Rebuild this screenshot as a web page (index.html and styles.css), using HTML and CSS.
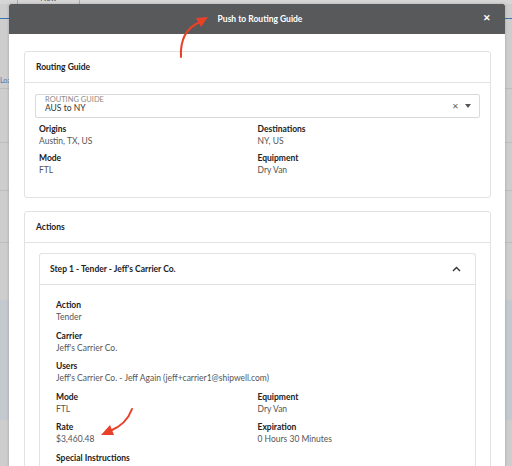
FILE: index.html
```html
<!DOCTYPE html>
<html lang="en">
<head>
    <meta charset="UTF-8">
    <title>Push to Routing Guide</title>
    <link rel="stylesheet" href="styles.css">
</head>
<body>
    <div class="page">
        <div class="bg-tabs"><span class="bg-tab">New</span></div>
        <div class="bg-line bg-line-left"></div>
        <div class="bg-line bg-line-right"></div>
        <span class="bg-link">Loads</span>

        <div class="modal">
            <div class="modal-header">
                <span class="modal-title">Push to Routing Guide</span>
                <span class="modal-close">&#x2715;</span>
            </div>
            <div class="modal-body">
                <div class="card">
                    <div class="card-header">Routing Guide</div>
                    <div class="card-body">
                        <div class="select">
                            <div class="select-text">
                                <div class="select-label">ROUTING GUIDE</div>
                                <div class="select-value">AUS to NY</div>
                            </div>
                            <span class="select-clear">&#x2715;</span>
                            <span class="select-caret"></span>
                        </div>
                        <div class="fields">
                            <div class="field">
                                <div class="field-label">Origins</div>
                                <div class="field-value">Austin, TX, US</div>
                            </div>
                            <div class="field">
                                <div class="field-label">Destinations</div>
                                <div class="field-value">NY, US</div>
                            </div>
                            <div class="field">
                                <div class="field-label">Mode</div>
                                <div class="field-value">FTL</div>
                            </div>
                            <div class="field">
                                <div class="field-label">Equipment</div>
                                <div class="field-value">Dry Van</div>
                            </div>
                        </div>
                    </div>
                </div>

                <div class="card">
                    <div class="card-header">Actions</div>
                    <div class="card-body actions-body">
                        <div class="card step">
                            <div class="card-header step-header">
                                <span>Step 1 - Tender - Jeff's Carrier Co.</span>
                                <svg class="chevron" width="9" height="6" viewBox="0 0 9 6"><path d="M1 5 L4.5 1.5 L8 5" fill="none" stroke="#333" stroke-width="1.4"/></svg>
                            </div>
                            <div class="step-body">
                                <div class="fields">
                                    <div class="field wide">
                                        <div class="field-label">Action</div>
                                        <div class="field-value">Tender</div>
                                    </div>
                                    <div class="field wide">
                                        <div class="field-label">Carrier</div>
                                        <div class="field-value">Jeff's Carrier Co.</div>
                                    </div>
                                    <div class="field wide">
                                        <div class="field-label">Users</div>
                                        <div class="field-value">Jeff's Carrier Co. - Jeff Again (jeff+carrier1@shipwell.com)</div>
                                    </div>
                                    <div class="field">
                                        <div class="field-label">Mode</div>
                                        <div class="field-value">FTL</div>
                                    </div>
                                    <div class="field">
                                        <div class="field-label">Equipment</div>
                                        <div class="field-value">Dry Van</div>
                                    </div>
                                    <div class="field">
                                        <div class="field-label">Rate</div>
                                        <div class="field-value">$3,460.48</div>
                                    </div>
                                    <div class="field">
                                        <div class="field-label">Expiration</div>
                                        <div class="field-value">0 Hours 30 Minutes</div>
                                    </div>
                                    <div class="field wide">
                                        <div class="field-label">Special Instructions</div>
                                    </div>
                                </div>
                            </div>
                        </div>
                    </div>
                </div>
            </div>
        </div>

        <!-- annotation arrows drawn over the screenshot -->
        <svg class="annotations" width="512" height="466" viewBox="0 0 512 466">
            <path d="M181 57 C180 40 186 28 200 22" fill="none" stroke="#e8412a" stroke-width="2" stroke-linecap="round"/>
            <polygon points="208,17 196,18 201,27" fill="#e8412a"/>
            <path d="M132 409 C128 420 120 427 110 431" fill="none" stroke="#e8412a" stroke-width="2" stroke-linecap="round"/>
            <polygon points="101,435 110,425 114,435" fill="#e8412a"/>
        </svg>
    </div>
</body>
</html>
```

FILE: styles.css
```css
body{
    margin: 0;
    font-family: Lato, "Open Sans", sans-serif;
    background: #cdcdcd;
    overflow: hidden;
}
.page{
    position: relative;
    width: 512px;
    height: 466px;
    overflow: hidden;
    background:
        linear-gradient(#bdbdbd, #bdbdbd) 0 88px / 100% 1px no-repeat,
        linear-gradient(#bdbdbd, #bdbdbd) 0 142px / 100% 1px no-repeat,
        linear-gradient(#bdbdbd, #bdbdbd) 0 190px / 100% 1px no-repeat,
        linear-gradient(#bdbdbd, #bdbdbd) 0 242px / 100% 1px no-repeat,
        linear-gradient(#c4c8cf, #c4c8cf) 0 300px / 100% 120px no-repeat,
        #cdcdcd;
}
.bg-tabs{
    position: absolute;
    left: 0;
    top: 0;
    width: 100%;
    height: 4px;
    background: #d6d6d6;
    overflow: hidden;
}
.bg-tab{
    position: absolute;
    left: 17px;
    top: -7px;
    width: 61px;
    height: 11px;
    border-left: 1px solid #a9a9a9;
    border-right: 1px solid #a9a9a9;
    font-size: 8px;
    line-height: 10px;
    text-align: center;
    color: #555;
}
.bg-line{
    position: absolute;
    top: 18px;
    height: 1px;
    background: #3d72b0;
}
.bg-line-left{
    left: 0;
    width: 9px;
}
.bg-line-right{
    right: 0;
    width: 7px;
}
.bg-link{
    position: absolute;
    left: 0;
    top: 76px;
    font-size: 7px;
    color: #4a78b0;
}
.modal{
    position: absolute;
    left: 9px;
    top: 4px;
    width: 496px;
    height: 480px;
    background: #fff;
    box-shadow: 0 0 3px rgba(0,0,0,0.2);
}
.modal-header{
    height: 30px;
    background: #58595b;
    display: flex;
    align-items: center;
    justify-content: center;
    position: relative;
    color: #fff;
    border-radius: 2px 2px 0 0;
}
.modal-title{
    font-size: 8.5px;
    font-weight: bold;
    margin-left: 6px;
}
.modal-close{
    position: absolute;
    right: 14px;
    top: 8px;
    font-size: 9px;
    font-weight: bold;
}
.modal-body{
    padding: 17px 14px 0 15px;
    display: flex;
    flex-direction: column;
    gap: 13px;
}
.card{
    border: 1px solid #e2e2e2;
    border-radius: 3px;
    background: #fff;
}
.card-header{
    height: 30px;
    padding: 0 11px;
    display: flex;
    align-items: center;
    justify-content: space-between;
    border-bottom: 1px solid #e2e2e2;
    font-size: 8.5px;
    font-weight: bold;
    color: #222;
}
.card-body{
    padding: 11px 10px 21px 10px;
}
.select{
    height: 22px;
    border: 1px solid #d9d9d9;
    border-radius: 2px;
    display: flex;
    align-items: center;
    padding: 0 8px 0 9px;
}
.select-text{
    flex: 1;
    line-height: 9px;
    margin-top: -5px;
}
.select-label{
    font-size: 7.5px;
    color: #8a8a8a;
}
.select-value{
    font-size: 8.5px;
    color: #333;
}
.select-clear{
    font-size: 8px;
    color: #666;
    margin-right: 6px;
}
.select-caret{
    width: 0;
    height: 0;
    border-left: 3.5px solid transparent;
    border-right: 3.5px solid transparent;
    border-top: 4px solid #555;
}
.fields{
    display: grid;
    grid-template-columns: 1fr 1fr;
    row-gap: 5px;
    padding: 5px 4px 0 4px;
}
.field.wide{
    grid-column: 1 / 3;
}
.field-label{
    font-size: 8.5px;
    font-weight: bold;
    color: #222;
    line-height: 12px;
}
.field-value{
    font-size: 8.5px;
    color: #555;
    line-height: 12px;
}
.actions-body{
    padding: 10px 14px 0 14px;
}
.step{
    height: 300px;
    border-bottom: none;
}
.step-header{
    padding: 0 14px 0 10px;
}
.chevron{
    display: block;
}
.step-body{
    padding: 9px 12px 0 12px;
}
.step-body .fields{
    row-gap: 5.5px;
}
.step-body .field-value{
    line-height: 13px;
}
.annotations{
    position: absolute;
    left: 0;
    top: 0;
}
```
